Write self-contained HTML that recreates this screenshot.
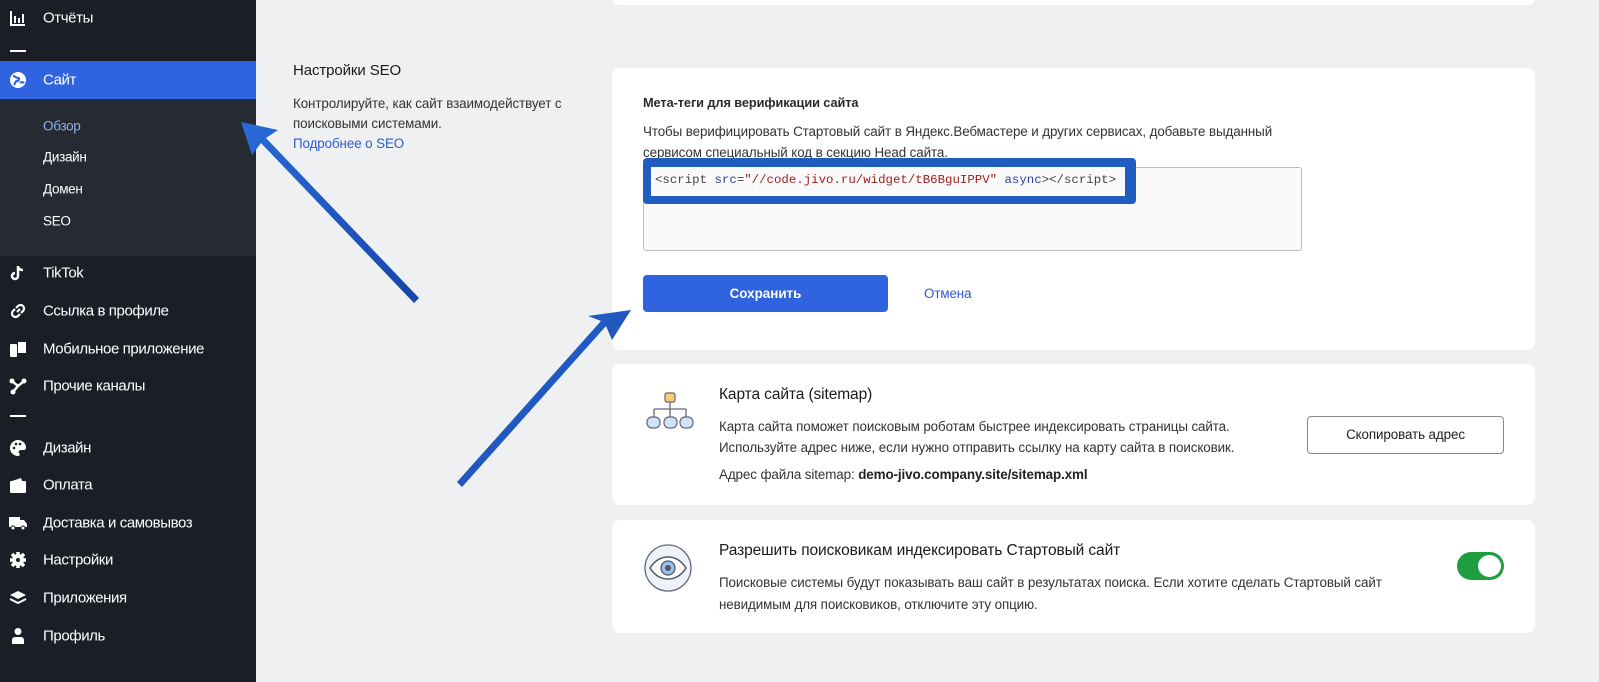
<!DOCTYPE html>
<html><head><meta charset="utf-8"><style>
*{margin:0;padding:0;box-sizing:border-box}
body{width:1599px;height:682px;overflow:hidden;background:#eef0f2;font-family:"Liberation Sans","Noto Sans CJK SC",sans-serif;position:relative;color:#222}
.a{position:absolute;white-space:nowrap}
#sb{position:absolute;left:0;top:0;width:256px;height:682px;background:#1b1e26}
.it{position:absolute;left:43px;color:#fff;font-size:15px;letter-spacing:-0.4px;transform:translateY(-50%)}
.ic{position:absolute;left:9px;width:18px;height:18px;transform:translateY(-50%)}
.sub{position:absolute;left:43px;color:#fff;font-size:13.5px;letter-spacing:-0.3px;transform:translateY(-50%)}
.card{position:absolute;background:#fff;border-radius:8px}
.t{font-size:13.4px;letter-spacing:-0.1px;color:#2a2a2a}
.h{font-size:15.5px;letter-spacing:-0.1px;color:#1a1a1a}
</style></head><body>
<div id="sb">
 <div class="a" style="left:0;top:61px;width:256px;height:38px;background:#2f63df"></div>
 <div class="a" style="left:0;top:99px;width:256px;height:157px;background:#262b33"></div>
 <svg class="ic" style="top:18px" viewBox="0 0 18 18"><path d="M2 2v14h14" stroke="#fff" stroke-width="2" fill="none"/><rect x="5" y="7" width="2" height="7" fill="#fff"/><rect x="9" y="9" width="2" height="5" fill="#fff"/><rect x="13" y="5" width="2" height="9" fill="#fff"/></svg>
 <div class="it" style="top:18px">Отчёты</div>
 <div class="a" style="left:10px;top:50px;width:16px;height:2px;background:#fff"></div>
 <svg class="ic" style="top:80px" viewBox="0 0 18 18"><circle cx="9" cy="9" r="8" fill="#fff"/><path d="M4 5c2 0 3 2 5 2s1 3-1 3-2 3-3 4M11 12c1-1 3-1 4 0" stroke="#2f63df" stroke-width="2.2" fill="none"/></svg>
 <div class="it" style="top:80px">Сайт</div>
 <div class="sub" style="top:126px;color:#8fb0ee">Обзор</div>
 <div class="sub" style="top:157px">Дизайн</div>
 <div class="sub" style="top:189px">Домен</div>
 <div class="sub" style="top:221px">SEO</div>
 <svg class="ic" style="top:273px" viewBox="0 0 18 18"><path d="M9 2v10a3 3 0 1 1-3-3M9 2c0 3 2 4 5 4" stroke="#fff" stroke-width="2.5" fill="none"/></svg>
 <div class="it" style="top:273px">TikTok</div>
 <svg class="ic" style="top:311px" viewBox="0 0 18 18"><path d="M8 10l3-3M7 6l2-2a3 3 0 0 1 5 5l-2 2M11 12l-2 2a3 3 0 0 1-5-5l2-2" stroke="#fff" stroke-width="2.2" fill="none"/></svg>
 <div class="it" style="top:311px">Ссылка в профиле</div>
 <svg class="ic" style="top:349px" viewBox="0 0 18 18"><rect x="1" y="4" width="7" height="13" rx="1" fill="#fff"/><rect x="9" y="2" width="8" height="11" fill="#fff"/></svg>
 <div class="it" style="top:349px">Мобильное приложение</div>
 <svg class="ic" style="top:386px" viewBox="0 0 18 18"><circle cx="3" cy="4" r="2.5" fill="#fff"/><circle cx="15" cy="4" r="2.5" fill="#fff"/><circle cx="4" cy="15" r="2.5" fill="#fff"/><path d="M3 4l6 5 6-5M9 9l-5 6" stroke="#fff" stroke-width="2.5"/></svg>
 <div class="it" style="top:386px">Прочие каналы</div>
 <div class="a" style="left:10px;top:415px;width:16px;height:2px;background:#fff"></div>
 <svg class="ic" style="top:448px" viewBox="0 0 18 18"><path d="M9 1a8 8 0 1 0 0 16c2 0 2-2 1-3s0-3 2-3h3c2 0 2-2 2-3A8 8 0 0 0 9 1z" fill="#fff"/><circle cx="5" cy="9" r="1.3" fill="#1b1e26"/><circle cx="7" cy="5" r="1.3" fill="#1b1e26"/><circle cx="11" cy="5" r="1.3" fill="#1b1e26"/></svg>
 <div class="it" style="top:448px">Дизайн</div>
 <svg class="ic" style="top:485px" viewBox="0 0 18 18"><rect x="1" y="5" width="16" height="12" rx="1" fill="#fff"/><path d="M3 5l9-3 1 3" fill="#fff"/></svg>
 <div class="it" style="top:485px">Оплата</div>
 <svg class="ic" style="top:523px" viewBox="0 0 18 18"><rect x="0" y="3" width="11" height="10" fill="#fff"/><path d="M11 6h4l3 4v3h-7z" fill="#fff"/><circle cx="4" cy="14" r="2" fill="#fff" stroke="#1b1e26"/><circle cx="14" cy="14" r="2" fill="#fff" stroke="#1b1e26"/></svg>
 <div class="it" style="top:523px">Доставка и самовывоз</div>
 <svg class="ic" style="top:560px" viewBox="0 0 18 18"><circle cx="9" cy="9" r="6" fill="#fff"/><path d="M9 1v16M1 9h16M3 3l12 12M15 3L3 15" stroke="#fff" stroke-width="3.5"/><circle cx="9" cy="9" r="2" fill="#1b1e26"/></svg>
 <div class="it" style="top:560px">Настройки</div>
 <svg class="ic" style="top:598px" viewBox="0 0 18 18"><path d="M9 2l8 4-8 4-8-4z" fill="#fff"/><path d="M1 10l8 4 8-4" stroke="#fff" stroke-width="2" fill="none"/></svg>
 <div class="it" style="top:598px">Приложения</div>
 <svg class="ic" style="top:636px" viewBox="0 0 18 18"><circle cx="9" cy="4.5" r="3.5" fill="#fff"/><path d="M3 17v-4a3 3 0 0 1 3-3h6a3 3 0 0 1 3 3v4z" fill="#fff"/></svg>
 <div class="it" style="top:636px">Профиль</div>
</div>

<div class="card" style="left:612px;top:-10px;width:923px;height:15px"></div>

<div class="a h" style="left:293px;top:62px;font-size:15px">Настройки SEO</div>
<div class="a t" style="left:293px;top:94px;line-height:20px;color:#333">Контролируйте, как сайт взаимодействует с<br>поисковыми системами.<br><span style="color:#2a5bd7">Подробнее о SEO</span></div>

<div class="card" style="left:612px;top:68px;width:923px;height:282px"></div>
<div class="a t" style="left:643px;top:95px;font-weight:bold;font-size:12.8px">Мета-теги для верификации сайта</div>
<div class="a t" style="left:643px;top:121px;line-height:21px;color:#333">Чтобы верифицировать Стартовый сайт в Яндекс.Вебмастере и других сервисах, добавьте выданный<br>сервисом специальный код в секцию Head сайта.</div>
<div class="a" style="left:643px;top:167px;width:659px;height:84px;border:1px solid #b9bcc1;border-radius:3px;background:#fafafa"></div>
<div class="a" style="left:643px;top:158px;width:493px;height:46px;background:#1f5dc0;border-radius:4px"></div>
<div class="a" style="left:651px;top:167px;width:474px;height:29px;background:#fafafa;font-family:'Liberation Mono',monospace;font-size:12.4px;line-height:26px;padding-left:4px;letter-spacing:0;color:#444">&lt;script <span style="color:#2e3fa0">src</span>=<span style="color:#9a2020">"//code.jivo.ru/widget/tB6BguIPPV"</span> <span style="color:#2e3fa0">async</span>&gt;&lt;/script&gt;</div>
<div class="a" style="left:643px;top:275px;width:245px;height:37px;background:#2f63df;border-radius:4px;color:#fff;font-weight:bold;font-size:13.4px;text-align:center;line-height:37px">Сохранить</div>
<div class="a t" style="left:924px;top:286px;color:#2a5bd7">Отмена</div>

<div class="card" style="left:612px;top:364px;width:923px;height:141px"></div>
<svg class="a" style="left:643px;top:392px" width="56" height="40" viewBox="0 0 56 40"><rect x="22" y="1" width="10" height="9" rx="2" fill="#f5cf7a" stroke="#667" stroke-width="1.2"/><path d="M27 10v7M11 17h32M11 17v8M27 17v8M43 17v8" stroke="#667" stroke-width="1.3" fill="none"/><rect x="4" y="25" width="13" height="11" rx="5" fill="#cfe3f7" stroke="#667" stroke-width="1.2"/><rect x="21" y="25" width="13" height="11" rx="5" fill="#cfe3f7" stroke="#667" stroke-width="1.2"/><rect x="37" y="25" width="13" height="11" rx="5" fill="#cfe3f7" stroke="#667" stroke-width="1.2"/></svg>
<div class="a h" style="left:719px;top:386px">Карта сайта (sitemap)</div>
<div class="a t" style="left:719px;top:416px;line-height:21px;color:#333">Карта сайта поможет поисковым роботам быстрее индексировать страницы сайта.<br>Используйте адрес ниже, если нужно отправить ссылку на карту сайта в поисковик.</div>
<div class="a t" style="left:719px;top:467px;color:#333">Адрес файла sitemap: <b style="color:#222">demo-jivo.company.site/sitemap.xml</b></div>
<div class="a t" style="left:1307px;top:416px;width:197px;height:38px;border:1px solid #888;border-radius:4px;text-align:center;line-height:36px;color:#222">Скопировать адрес</div>

<div class="card" style="left:612px;top:520px;width:923px;height:113px"></div>
<svg class="a" style="left:643px;top:543px" width="50" height="50" viewBox="0 0 50 50"><circle cx="25" cy="25" r="23" fill="#eef3f9" stroke="#667" stroke-width="1.3"/><path d="M7 25c5-8 11-11 18-11s13 3 18 11c-5 8-11 11-18 11S12 33 7 25z" fill="#fff" stroke="#556" stroke-width="1.5"/><circle cx="25" cy="25" r="7" fill="#9cc0e8" stroke="#556" stroke-width="1.3"/><circle cx="25" cy="25" r="3" fill="#556"/></svg>
<div class="a h" style="left:719px;top:542px">Разрешить поисковикам индексировать Стартовый сайт</div>
<div class="a t" style="left:719px;top:572px;line-height:22px;color:#333">Поисковые системы будут показывать ваш сайт в результатах поиска. Если хотите сделать Стартовый сайт<br>невидимым для поисковиков, отключите эту опцию.</div>
<div class="a" style="left:1457px;top:552px;width:47px;height:28px;border-radius:14px;background:#1e9e3e"></div>
<div class="a" style="left:1478px;top:555px;width:23px;height:22px;border-radius:50%;background:#fff"></div>

<svg class="a" style="left:0;top:0" width="1599" height="682">
<defs><linearGradient id="g" x1="0" y1="0" x2="1" y2="1"><stop offset="0" stop-color="#2a6ad8"/><stop offset="1" stop-color="#1646a8"/></linearGradient></defs>
<polygon points="241,122 278,130 266,138 419,298 414,303 261,143 252,155" fill="url(#g)"/>
<polygon points="631,310 612,340 606,326 462,487 457,482 601,321 588,316" fill="url(#g)"/>
</svg>
</body></html>
